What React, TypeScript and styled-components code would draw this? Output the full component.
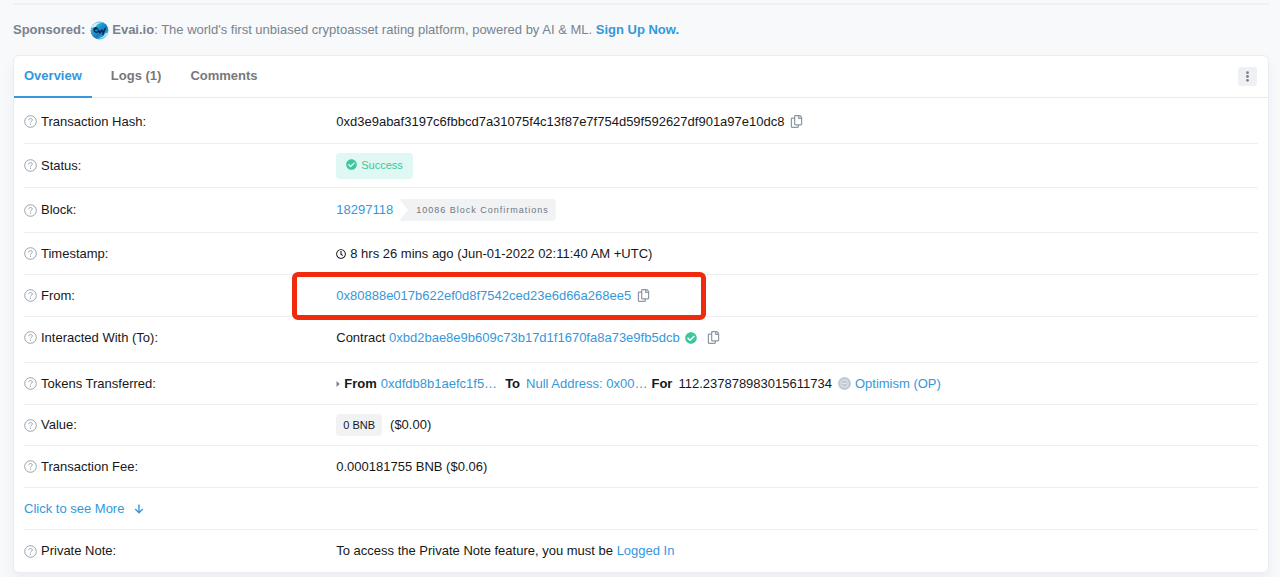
import React from "react";
import styled, { createGlobalStyle, css } from "styled-components";
import { FaCheckCircle, FaRegClock, FaRegCopy } from "react-icons/fa";

const GlobalStyle = createGlobalStyle`
  *, *::before, *::after { box-sizing: border-box; }
  body {
    margin: 0;
    background: #f8f9fb;
    color: #16181a;
    font-family: "Liberation Sans", Arial, Helvetica, sans-serif;
    font-size: 13px;
    line-height: 20px;
  }
`;

const Page = styled.main`
  padding: 3px 11px 6px 13px;
`;

const Divider = styled.hr`
  margin: 0;
  border: 0;
  border-top: 2px solid #eef0f3;
`;

const Sponsor = styled.p`
  display: flex;
  align-items: center;
  margin: 0;
  padding: 15px 0;
  color: #77838f;
`;

const SponsorLogo = styled.svg`
  flex: none;
  margin: 0 3px 0 5px;
`;

const Link = styled.a<{ $bold?: boolean }>`
  color: #3498db;
  text-decoration: none;
  font-weight: ${(p) => (p.$bold ? 700 : 400)};
`;

const Card = styled.section`
  background: #fff;
  border: 1px solid #e9ecf1;
  border-radius: 6px;
  box-shadow: 0 8px 12px rgba(189, 197, 209, 0.2);
`;

const CardHeader = styled.header`
  display: flex;
  align-items: center;
  justify-content: space-between;
  padding-right: 11px;
  border-bottom: 1px solid #e7eaf3;
`;

const Tabs = styled.div`
  display: flex;
  gap: 9px;
  margin-bottom: -1px;
`;

const Tab = styled.button<{ $active?: boolean }>`
  height: 42px;
  padding: 0 10px 1px;
  border: 0;
  border-bottom: 2px solid ${(p) => (p.$active ? "#3498db" : "transparent")};
  background: none;
  color: ${(p) => (p.$active ? "#3498db" : "#77787b")};
  font: inherit;
  font-weight: 700;
`;

const MenuButton = styled.button`
  display: grid;
  place-items: center;
  width: 19px;
  height: 19px;
  padding: 0;
  border: 0;
  border-radius: 3px;
  background: #eff0f4;
  color: #77838f;
`;

const Details = styled.dl`
  margin: 0;
  padding: 2px 10px 0;
`;

const rowHeights = { small: 41, normal: 42, medium: 44, large: 45, tall: 46 };

const Row = styled.div<{ $size?: keyof typeof rowHeights }>`
  display: grid;
  grid-template-columns: 1fr 3fr;
  column-gap: 5px;
  align-items: center;
  min-height: ${(p) => rowHeights[p.$size ?? "normal"]}px;
  padding-bottom: ${(p) => (p.$size === "tall" ? 4 : 0)}px;
  border-bottom: 1px solid #eceef3;

  &:last-child {
    border-bottom: 0;
  }
`;

const Term = styled.dt`
  display: flex;
  align-items: center;
  gap: 4px;
`;

const Value = styled.dd`
  display: flex;
  align-items: center;
  margin: 0;
  white-space: nowrap;
`;

const Highlighted = styled.span`
  position: relative;
  display: flex;
  align-items: center;

  &::after {
    content: "";
    position: absolute;
    inset: -14px -56px -14px -44px;
    border: 5px solid #f02a0c;
    border-radius: 6px;
    pointer-events: none;
  }
`;

const tagBase = css`
  display: inline-flex;
  align-items: center;
  border-radius: 4px;
`;

const StatusTag = styled.span`
  ${tagBase}
  gap: 4px;
  height: 26px;
  padding: 0 10px 2px;
  background: #e0f8f3;
  color: #3cc79e;
  font-size: 11px;
`;

const AmountTag = styled.span`
  ${tagBase}
  height: 22px;
  margin-right: 8px;
  padding: 0 7px;
  background: #f1f2f4;
  font-size: 11px;
`;

const ConfirmTag = styled.span`
  ${tagBase}
  height: 22px;
  margin-left: 6px;
  padding: 0 7px 0 17px;
  background: #f1f2f4;
  color: #6c7884;
  font-size: 9px;
  letter-spacing: 1px;
  clip-path: polygon(0 0, 100% 0, 100% 100%, 0 100%, 9px 50%);
`;

const CopyButton = styled.button`
  display: inline-flex;
  margin-left: 6px;
  padding: 0;
  border: 0;
  background: none;
  color: #8c98a4;
`;

const Transfer = styled.span`
  display: flex;
  align-items: center;
  gap: 4px;
`;

const Wide = styled.b`
  margin: 0 2px 0 4px;
`;

const Amount = styled.span`
  margin: 0 2px;
`;

const MoreLink = styled(Link)`
  display: flex;
  align-items: center;
  gap: 10px;
`;

const Spaced = styled.span`
  display: inline-flex;
  margin: 0 4px 0 5px;
  color: #3cc79e;
`;

const HelpIcon = () => (
  <svg width="13" height="13" viewBox="0 0 13 13" fill="none" stroke="#8c98a4" aria-hidden="true">
    <circle cx="6.5" cy="6.5" r="5.8" strokeWidth="0.9" />
    <path d="M4.8 5.2c0-1 .7-1.7 1.7-1.7s1.8.6 1.8 1.5c0 1.3-1.8 1.2-1.8 2.6" strokeWidth="0.9" />
    <circle cx="6.5" cy="9.2" r="0.6" fill="#8c98a4" stroke="none" />
  </svg>
);

const EvaiLogo = () => (
  <SponsorLogo width="19" height="19" viewBox="0 0 19 19" aria-hidden="true">
    <defs>
      <linearGradient id="evai" x1="0" y1="0" x2="1" y2="1">
        <stop offset="0" stopColor="#9be5f5" />
        <stop offset="0.35" stopColor="#2b9fd0" />
        <stop offset="0.6" stopColor="#1379bd" />
        <stop offset="1" stopColor="#6fe0f2" />
      </linearGradient>
    </defs>
    <circle cx="9.5" cy="9.5" r="9" fill="url(#evai)" />
    <path d="M1 6.5C3 2.5 8 .5 12.5 2 8.500 2 6 4 5.500 6.500z" fill="#c6f3fa" />
    <path d="M18 11.500c-1.500 4.500-6 7-10.500 5.500 4 0 7-1.500 7.500-4.500z" fill="#a9effa" />
    <path
      d="M4 8.200l3.200-.4c-.4-1.800-3.400-1.300-3.200 1 .2 2.600 2.900 3 4.300 1.600M8.300 8.600l1.700 3.400 1.700-3 1.500 2.600 2.200-4.300-2.800 6.700"
      fill="none"
      stroke="#082b55"
      strokeWidth="1.500"
      strokeLinejoin="round"
    />
  </SponsorLogo>
);

const DotsIcon = () => (
  <svg width="3" height="11" viewBox="0 0 3 11" fill="currentColor" aria-hidden="true">
    <circle cx="1.500" cy="1.700" r="1.400" />
    <circle cx="1.500" cy="5.500" r="1.400" />
    <circle cx="1.500" cy="9.300" r="1.400" />
  </svg>
);

const ArrowDown = () => (
  <svg width="10" height="10" viewBox="0 0 10 10" fill="none" stroke="currentColor" strokeWidth="1.400" aria-hidden="true">
    <path d="M5 .5v8.300M1.200 5 5 8.800 8.800 5" />
  </svg>
);

const CaretRight = () => (
  <svg width="4" height="6" viewBox="0 0 4 6" fill="#77838f" aria-hidden="true">
    <path d="M.5 0 3.800 3 .5 6z" />
  </svg>
);

const TokenIcon = () => (
  <svg width="13" height="13" viewBox="0 0 14 14" aria-hidden="true">
    <circle cx="7" cy="7" r="7" fill="#c3c8d5" />
    <circle cx="7" cy="7" r="4" fill="none" stroke="#e5e8ef" strokeWidth="1" />
    <path d="M4.500 7h5" stroke="#e5e8ef" strokeWidth="1.200" />
  </svg>
);

const Copy = () => (
  <CopyButton type="button" aria-label="Copy to clipboard">
    <FaRegCopy size={13} />
  </CopyButton>
);

type FieldProps = {
  label: string;
  size?: keyof typeof rowHeights;
  children: React.ReactNode;
};

const Field = ({ label, size, children }: FieldProps) => (
  <Row $size={size}>
    <Term>
      <HelpIcon />
      {label}:
    </Term>
    <Value>{children}</Value>
  </Row>
);

export default function App() {
  return (
    <>
      <GlobalStyle />
      <Page>
        <Divider />
        <Sponsor>
          <b>Sponsored:</b>
          <EvaiLogo />
          <span>
            <b>Evai.io</b>: The world's first unbiased cryptoasset rating platform, powered by AI &amp; ML.{" "}
            <Link href="#signup" $bold>Sign Up Now.</Link>
          </span>
        </Sponsor>
        <Card>
          <CardHeader>
            <Tabs role="tablist">
              <Tab type="button" role="tab" aria-selected="true" $active>Overview</Tab>
              <Tab type="button" role="tab" aria-selected="false">Logs (1)</Tab>
              <Tab type="button" role="tab" aria-selected="false">Comments</Tab>
            </Tabs>
            <MenuButton type="button" aria-label="More options">
              <DotsIcon />
            </MenuButton>
          </CardHeader>
          <Details>
            <Field label="Transaction Hash" size="medium">
              0xd3e9abaf3197c6fbbcd7a31075f4c13f87e7f754d59f592627df901a97e10dc8
              <Copy />
            </Field>
            <Field label="Status" size="medium">
              <StatusTag>
                <FaCheckCircle size={11} />
                Success
              </StatusTag>
            </Field>
            <Field label="Block" size="large">
              <Link href="#block">18297118</Link>
              <ConfirmTag>10086 Block Confirmations</ConfirmTag>
            </Field>
            <Field label="Timestamp">
              <Transfer>
                <FaRegClock size={10} />
                8 hrs 26 mins ago (Jun-01-2022 02:11:40 AM +UTC)
              </Transfer>
            </Field>
            <Field label="From">
              <Highlighted>
                <Link href="#from">0x80888e017b622ef0d8f7542ced23e6d66a268ee5</Link>
                <Copy />
              </Highlighted>
            </Field>
            <Field label="Interacted With (To)" size="tall">
              <span>
                Contract <Link href="#contract">0xbd2bae8e9b609c73b17d1f1670fa8a73e9fb5dcb</Link>
              </span>
              <Spaced>
                <FaCheckCircle size={12} />
              </Spaced>
              <Copy />
            </Field>
            <Field label="Tokens Transferred">
              <Transfer>
                <CaretRight />
                <b>From</b>
                <Link href="#sender">0xdfdb8b1aefc1f5…</Link>
                <Wide>To</Wide>
                <Link href="#recipient">Null Address: 0x00…</Link>
                <b>For</b>
                <Amount>112.237878983015611734</Amount>
                <TokenIcon />
                <Link href="#token">Optimism (OP)</Link>
              </Transfer>
            </Field>
            <Field label="Value" size="small">
              <AmountTag>0 BNB</AmountTag>
              ($0.00)
            </Field>
            <Field label="Transaction Fee">0.000181755 BNB ($0.06)</Field>
            <Row>
              <dt>
                <MoreLink href="#more">
                  Click to see More
                  <ArrowDown />
                </MoreLink>
              </dt>
            </Row>
            <Field label="Private Note">
              <span>
                To access the Private Note feature, you must be <Link href="#login">Logged In</Link>
              </span>
            </Field>
          </Details>
        </Card>
      </Page>
    </>
  );
}
